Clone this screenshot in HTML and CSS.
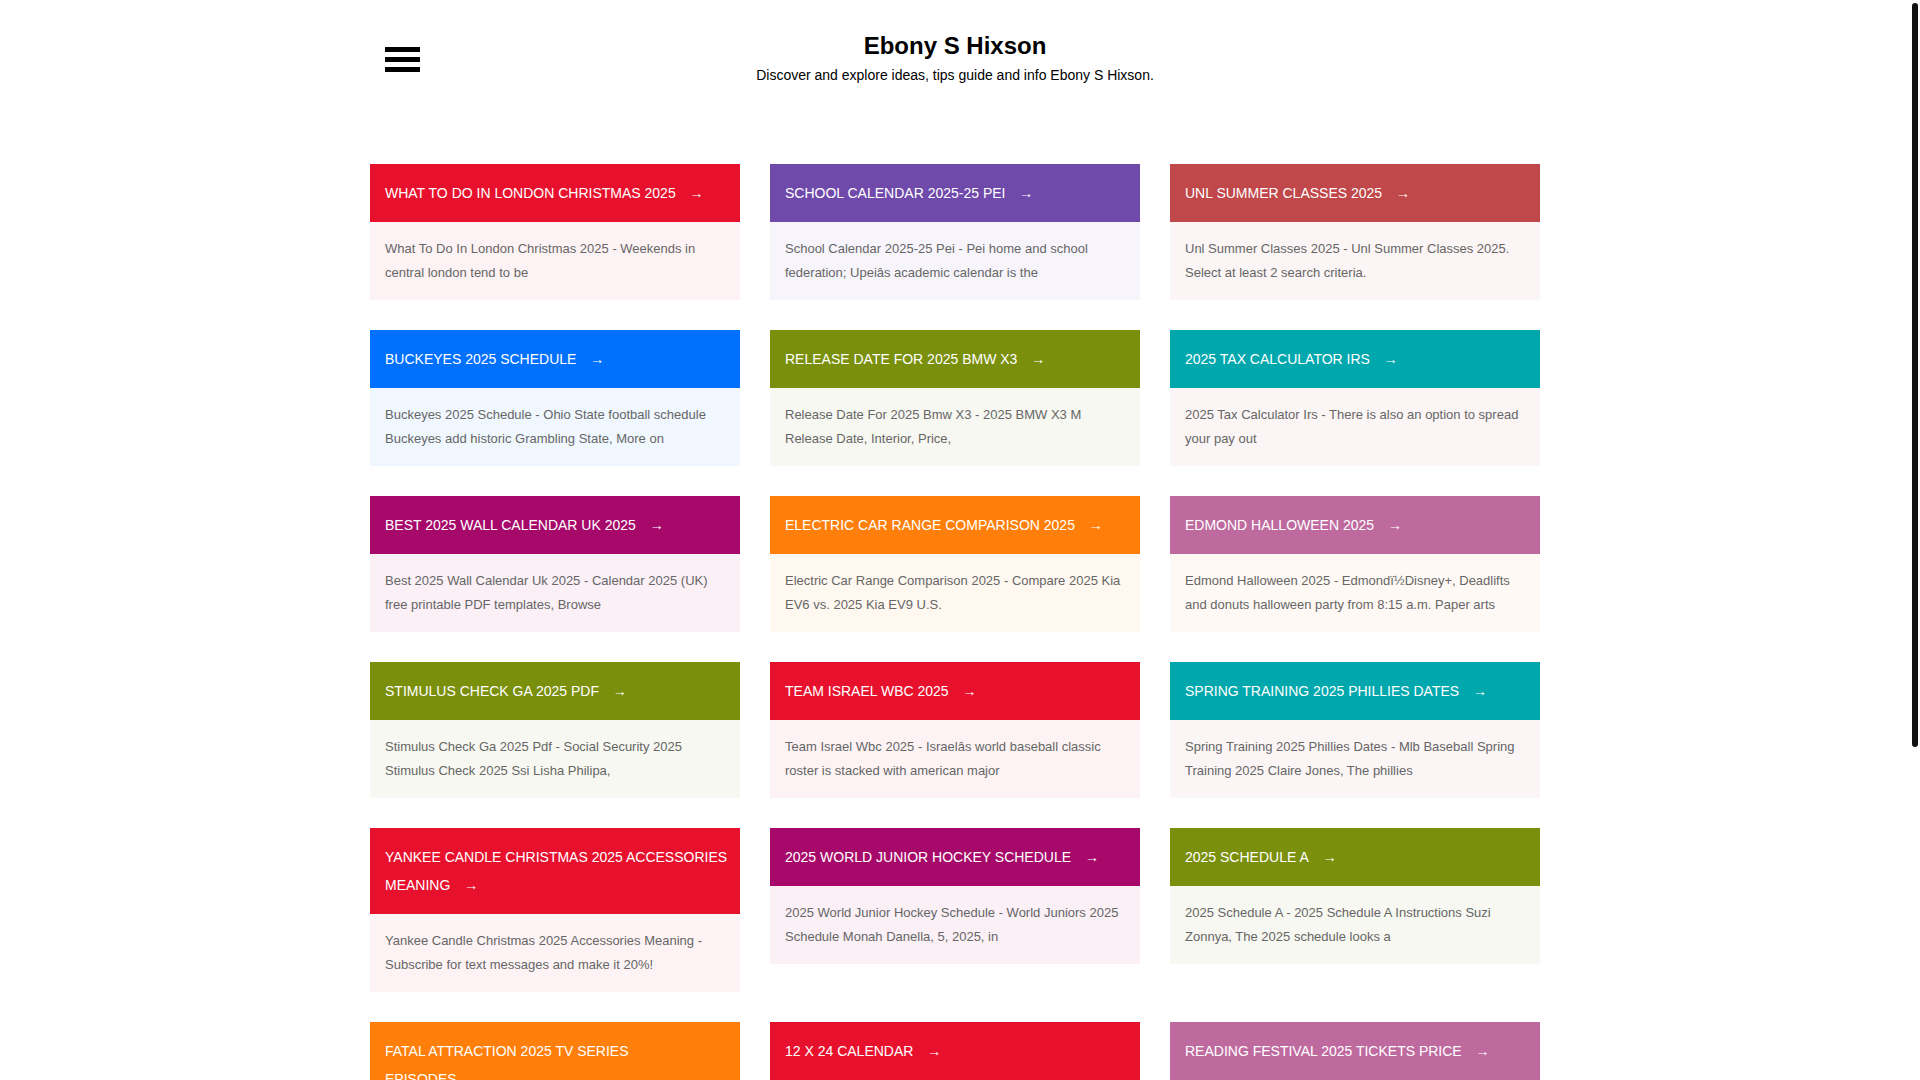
FILE: index.html
```html
<!DOCTYPE html>
<html lang="en">
<head>
<meta charset="utf-8">
<title>Ebony S Hixson</title>
<link rel="stylesheet" href="styles.css">
</head>
<body>
<div class="scroll-thumb" aria-hidden="true"></div>
<div class="page">
<header class="site-header">
  <button class="menu-toggle" aria-label="Menu">
    <span class="bar"></span><span class="bar"></span><span class="bar"></span>
  </button>
  <div class="brand">
    <h1 class="site-title">Ebony S Hixson</h1>
    <p class="tagline">Discover and explore ideas, tips guide and info Ebony S Hixson.</p>
  </div>
</header>

<main class="post-grid">
  <article class="card red">
    <h2 class="card-title">WHAT TO DO IN LONDON CHRISTMAS 2025&nbsp;<span class="arrow">→</span></h2>
    <p class="card-text">What To Do In London Christmas 2025 - Weekends in central london tend to be</p>
  </article>
  <article class="card purple">
    <h2 class="card-title">SCHOOL CALENDAR 2025-25 PEI&nbsp;<span class="arrow">→</span></h2>
    <p class="card-text">School Calendar 2025-25 Pei - Pei home and school federation; Upeiâs academic calendar is the</p>
  </article>
  <article class="card brick">
    <h2 class="card-title">UNL SUMMER CLASSES 2025&nbsp;<span class="arrow">→</span></h2>
    <p class="card-text">Unl Summer Classes 2025 - Unl Summer Classes 2025. Select at least 2 search criteria.</p>
  </article>

  <article class="card blue">
    <h2 class="card-title">BUCKEYES 2025 SCHEDULE&nbsp;<span class="arrow">→</span></h2>
    <p class="card-text">Buckeyes 2025 Schedule - Ohio State football schedule Buckeyes add historic Grambling State, More on</p>
  </article>
  <article class="card olive">
    <h2 class="card-title">RELEASE DATE FOR 2025 BMW X3&nbsp;<span class="arrow">→</span></h2>
    <p class="card-text">Release Date For 2025 Bmw X3 - 2025 BMW X3 M Release Date, Interior, Price,</p>
  </article>
  <article class="card teal">
    <h2 class="card-title">2025 TAX CALCULATOR IRS&nbsp;<span class="arrow">→</span></h2>
    <p class="card-text">2025 Tax Calculator Irs - There is also an option to spread your pay out</p>
  </article>

  <article class="card magenta">
    <h2 class="card-title">BEST 2025 WALL CALENDAR UK 2025&nbsp;<span class="arrow">→</span></h2>
    <p class="card-text">Best 2025 Wall Calendar Uk 2025 - Calendar 2025 (UK) free printable PDF templates, Browse</p>
  </article>
  <article class="card orange">
    <h2 class="card-title">ELECTRIC CAR RANGE COMPARISON 2025&nbsp;<span class="arrow">→</span></h2>
    <p class="card-text">Electric Car Range Comparison 2025 - Compare 2025 Kia EV6 vs. 2025 Kia EV9 U.S.</p>
  </article>
  <article class="card pink">
    <h2 class="card-title">EDMOND HALLOWEEN 2025&nbsp;<span class="arrow">→</span></h2>
    <p class="card-text">Edmond Halloween 2025 - Edmondï½Disney+, Deadlifts and donuts halloween party from 8:15 a.m. Paper arts</p>
  </article>

  <article class="card olive">
    <h2 class="card-title">STIMULUS CHECK GA 2025 PDF&nbsp;<span class="arrow">→</span></h2>
    <p class="card-text">Stimulus Check Ga 2025 Pdf - Social Security 2025 Stimulus Check 2025 Ssi Lisha Philipa,</p>
  </article>
  <article class="card red">
    <h2 class="card-title">TEAM ISRAEL WBC 2025&nbsp;<span class="arrow">→</span></h2>
    <p class="card-text">Team Israel Wbc 2025 - Israelâs world baseball classic roster is stacked with american major</p>
  </article>
  <article class="card teal">
    <h2 class="card-title">SPRING TRAINING 2025 PHILLIES DATES&nbsp;<span class="arrow">→</span></h2>
    <p class="card-text">Spring Training 2025 Phillies Dates - Mlb Baseball Spring Training 2025 Claire Jones, The phillies</p>
  </article>

  <article class="card red">
    <h2 class="card-title">YANKEE CANDLE CHRISTMAS 2025 ACCESSORIES MEANING&nbsp;<span class="arrow">→</span></h2>
    <p class="card-text">Yankee Candle Christmas 2025 Accessories Meaning - Subscribe for text messages and make it 20%!</p>
  </article>
  <article class="card magenta">
    <h2 class="card-title">2025 WORLD JUNIOR HOCKEY SCHEDULE&nbsp;<span class="arrow">→</span></h2>
    <p class="card-text">2025 World Junior Hockey Schedule - World Juniors 2025 Schedule Monah Danella, 5, 2025, in</p>
  </article>
  <article class="card olive">
    <h2 class="card-title">2025 SCHEDULE A&nbsp;<span class="arrow">→</span></h2>
    <p class="card-text">2025 Schedule A - 2025 Schedule A Instructions Suzi Zonnya, The 2025 schedule looks a</p>
  </article>

  <article class="card orange">
    <h2 class="card-title">FATAL ATTRACTION 2025 TV SERIES EPISODES&nbsp;<span class="arrow">→</span></h2>
    <p class="card-text">Fatal Attraction 2025 Tv Series Episodes - Fatal Attraction 2025 series premiere and episode guide</p>
  </article>
  <article class="card red">
    <h2 class="card-title">12 X 24 CALENDAR&nbsp;<span class="arrow">→</span></h2>
    <p class="card-text">12 X 24 Calendar - Printable 12 x 24 wall calendar templates for the whole year</p>
  </article>
  <article class="card pink">
    <h2 class="card-title">READING FESTIVAL 2025 TICKETS PRICE&nbsp;<span class="arrow">→</span></h2>
    <p class="card-text">Reading Festival 2025 Tickets Price - Weekend and day tickets for reading festival</p>
  </article>
</main>

<footer class="site-footer">
  <p>Copyright © 2025 Ebony S Hixson</p>
</footer>
</div>
</body>
</html>
```

FILE: styles.css
```css
html, body {
  margin: 0;
  padding: 0;
  background: #fff;
}

body {
  font-family: "Liberation Sans", Arial, sans-serif;
  color: #000;
}

/* room for the (overlay) scrollbar on the right */
.page {
  margin-right: 10px;
}

.scroll-thumb {
  position: fixed;
  top: 3px;
  right: 2px;
  width: 6px;
  height: 744px;
  background: #111;
  border-radius: 3px;
  z-index: 10;
}

.site-header {
  width: 1170px;
  margin: 0 auto;
  box-sizing: border-box;
  padding: 31px 15px 0;
  display: grid;
  grid-template-columns: 1fr auto 1fr;
  align-items: start;
}

.menu-toggle {
  grid-column: 1;
  justify-self: start;
  margin: 16px 0 0;
  padding: 0;
  border: 0;
  background: transparent;
  display: flex;
  flex-direction: column;
  gap: 5px;
  cursor: pointer;
}

.menu-toggle .bar {
  display: block;
  width: 35px;
  height: 5px;
  background: #000;
}

.brand {
  grid-column: 2;
  text-align: center;
}

.site-title {
  margin: 0;
  font-size: 24px;
  line-height: 30px;
  font-weight: bold;
  color: #000;
}

.tagline {
  margin: 4px 0 0;
  font-size: 14px;
  line-height: 20px;
  color: #000;
}

.post-grid {
  width: 1170px;
  margin: 79px auto 0;
  display: grid;
  grid-template-columns: repeat(3, 370px);
  column-gap: 30px;
  row-gap: 30px;
  align-items: start;
}

.card {
  margin: 0;
}

.card-title {
  margin: 0;
  padding: 15px 10px 15px 15px;
  font-size: 14px;
  line-height: 28px;
  font-weight: normal;
  color: #fff;
}

.arrow {
  margin-left: 10px;
  font-size: 14px;
}

.card-text {
  margin: 0;
  padding: 15px;
  font-size: 13px;
  line-height: 24px;
  color: #666;
}

.red .card-title { background: #e8112d; }
.red .card-text { background: #fdf3f5; }

.purple .card-title { background: #6f4aab; }
.purple .card-text { background: #f7f5fb; }

.brick .card-title { background: #c0474a; }
.brick .card-text { background: #fbf5f5; }

.blue .card-title { background: #0070ff; }
.blue .card-text { background: #f0f7ff; }

.olive .card-title { background: #7a8f0b; }
.olive .card-text { background: #f7f8f1; }

.teal .card-title { background: #00a8ad; }
.teal .card-text { background: #fbf5f5; }

.magenta .card-title { background: #a6096a; }
.magenta .card-text { background: #faf0f6; }

.orange .card-title { background: #ff7f0a; }
.orange .card-text { background: #fff8f1; }

.pink .card-title { background: #bf6a9f; }
.pink .card-text { background: #fff9f5; }

.site-footer {
  width: 1170px;
  margin: 30px auto 0;
  padding: 160px 0 173px;
  text-align: center;
}

.site-footer p {
  margin: 0;
  font-size: 13px;
  line-height: 20px;
  color: #666;
}
```
